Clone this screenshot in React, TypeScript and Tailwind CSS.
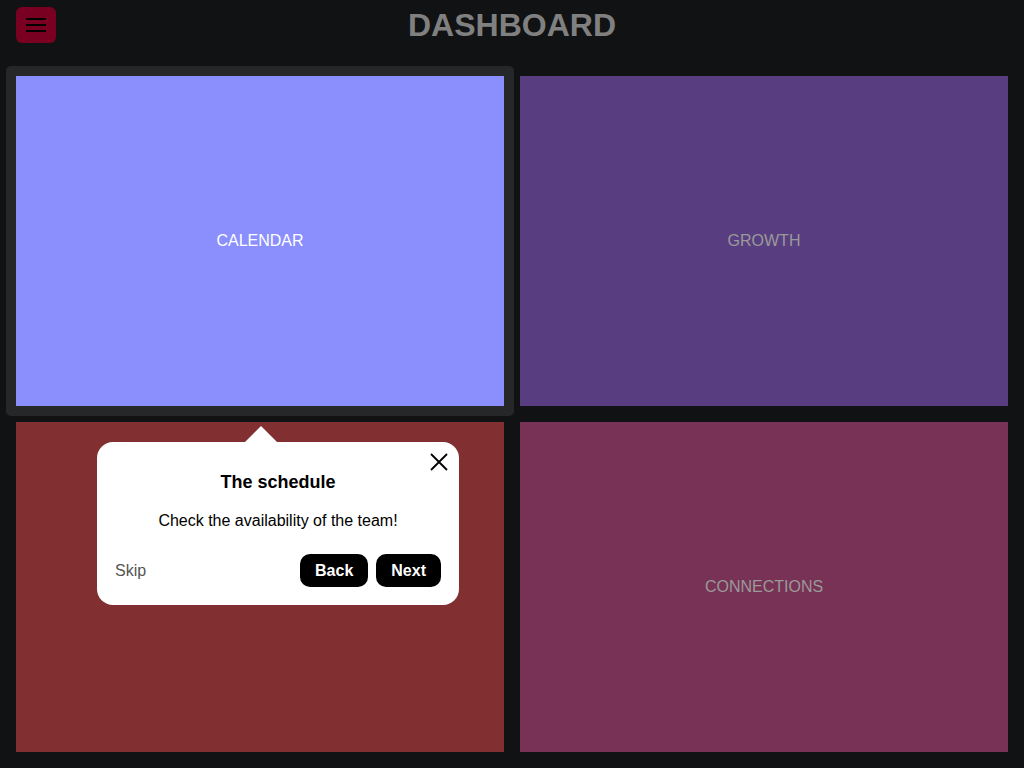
function Card({ label, className, labelClass }: { label: string; className: string; labelClass: string }) {
  return (
    <div className={`flex items-center justify-center ${className}`}>
      <span className={`text-base ${labelClass}`}>{label}</span>
    </div>
  );
}

export default function App() {
  return (
    <main
      className="min-h-[768px] bg-[#111214] px-4 pb-4"
      style={{ fontFamily: '"Liberation Sans", Arial, sans-serif' }}
    >
      <header className="relative flex h-[50px] items-center">
        <button className="flex h-9 w-10 flex-col items-center justify-center gap-1 rounded-md bg-[#7a0021]">
          <span className="h-0.5 w-5 bg-black" />
          <span className="h-0.5 w-5 bg-black" />
          <span className="h-0.5 w-5 bg-black" />
        </button>
        <h1 className="pointer-events-none absolute inset-x-0 top-0 flex h-[50px] items-center justify-center text-[32px] font-bold text-[#808080]">
          DASHBOARD
        </h1>
      </header>

      <div className="mt-[26px] grid grid-cols-2 grid-rows-[330px_330px] gap-4">
        <div className="relative">
          {/* spotlight */}
          <div className="absolute -inset-[10px] rounded-[5px] bg-[#262729]" />
          <Card label="CALENDAR" className="relative h-full bg-[#8a8ffd]" labelClass="text-white" />

          {/* tour popover */}
          <div className="absolute left-[81px] top-[366px] z-10 w-[362px]">
            <div className="absolute -top-4 left-[148px] h-0 w-0 border-x-[16px] border-b-[16px] border-x-transparent border-b-white" />
            <div className="relative rounded-2xl bg-white px-[18px] pb-[18px] pt-[28px] text-black">
              <button className="absolute right-[11px] top-[11px]">
                <svg width="18" height="18" viewBox="0 0 18 18" fill="none" stroke="black" strokeWidth="1.8">
                  <path d="M1 1L17 17M17 1L1 17" />
                </svg>
              </button>
              <h2 className="text-center text-lg font-bold leading-6">The schedule</h2>
              <p className="mt-[15px] text-center text-base leading-6">Check the availability of the team!</p>
              <div className="mt-[21px] flex items-center justify-between">
                <button className="text-base text-[#555]">Skip</button>
                <div className="flex gap-2">
                  <button className="h-[33px] rounded-[10px] bg-black px-[15px] text-base font-bold text-white">Back</button>
                  <button className="h-[33px] rounded-[10px] bg-black px-[15px] text-base font-bold text-white">Next</button>
                </div>
              </div>
            </div>
          </div>
        </div>
        <Card label="GROWTH" className="bg-[#583e80]" labelClass="text-[#9a9a9a]" />
        <Card label="TASKS" className="bg-[#812f31]" labelClass="text-[#9a9a9a]" />
        <Card label="CONNECTIONS" className="bg-[#783255]" labelClass="text-[#9a9a9a]" />
      </div>
    </main>
  );
}
